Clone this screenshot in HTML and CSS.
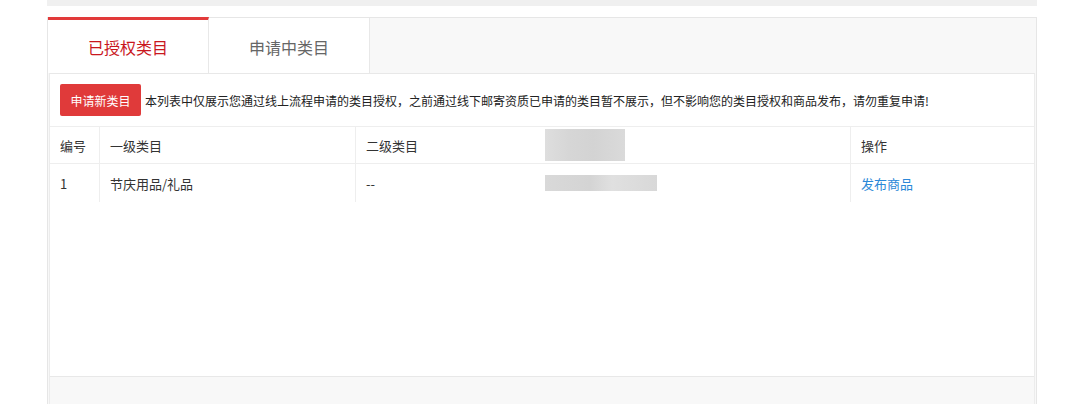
FILE: index.html
```html
<!DOCTYPE html>
<html lang="zh-CN">
<head>
    <meta charset="UTF-8">
    <meta name="viewport" content="width=device-width, initial-scale=1.0">
    <title>类目管理</title>
    <link rel="stylesheet" href="styles.css">
</head>
<body>

    <div class="page">
        <div class="top-strip"></div>

        <!-- Tabs -->
        <div class="tabs">
            <div class="tab-head">
                <div class="tab active">已授权类目</div>
                <div class="tab">申请中类目</div>
            </div>

            <div class="panel">
                <div class="panel-body">
                    <div class="toolbar">
                        <button class="btn-apply">申请新类目</button>
                        <span class="notice">本列表中仅展示您通过线上流程申请的类目授权，之前通过线下邮寄资质已申请的类目暂不展示，但不影响您的类目授权和商品发布，请勿重复申请!</span>
                    </div>

                    <table class="cat-table">
                        <thead>
                            <tr>
                                <th class="col-no">编号</th>
                                <th class="col-first">一级类目</th>
                                <th class="col-second">二级类目</th>
                                <th class="col-blur"><span class="blur blur-head"></span></th>
                                <th class="col-op">操作</th>
                            </tr>
                        </thead>
                        <tbody>
                            <tr>
                                <td>1</td>
                                <td>节庆用品/礼品</td>
                                <td>--</td>
                                <td><span class="blur blur-body"></span></td>
                                <td><a href="#">发布商品</a></td>
                            </tr>
                        </tbody>
                    </table>
                </div>
                <div class="panel-foot"></div>
            </div>
        </div>
    </div>

</body>
</html>
```

FILE: styles.css
```css
/* General */
body {
    margin: 0;
    background: #fff;
    font-family: "Noto Sans CJK SC", "Noto Sans", sans-serif;
    color: #333;
}

.page {
    width: 990px;
    margin-left: 47px;
}

.top-strip {
    height: 6px;
    background: #f0f0f0;
    margin-bottom: 11px;
}

/* Tabs */
.tabs {
    border: 1px solid #e6e6e6;
    border-bottom: none;
    background: #f8f8f8;
}

.tab-head {
    display: flex;
    height: 55px;
}

.tab {
    width: 161px;
    box-sizing: border-box;
    border-right: 1px solid #e8e8e8;
    background: #fff;
    font-size: 16px;
    color: #666;
    display: flex;
    align-items: center;
    justify-content: center;
    padding-top: 3px;
}

.tab.active {
    color: #c9171e;
    border-top: 3px solid #e23a3a;
    margin-top: -1px;
    padding-top: 0;
}

/* Panel */
.panel {
    margin: 0 1px;
    border-top: 1px solid #e8e8e8;
    border-left: 1px solid #ececec;
    border-right: 1px solid #ececec;
    background: #fff;
}

.panel-body {
    height: 302px;
}

.toolbar {
    display: flex;
    align-items: center;
    padding: 10px 10px;
    border-bottom: 1px solid #eee;
}

.btn-apply {
    width: 81px;
    height: 32px;
    padding: 0;
    border: none;
    border-radius: 2px;
    background: #e03a3a;
    color: #fff;
    font-family: inherit;
    font-size: 12px;
    cursor: pointer;
}

.notice {
    margin-left: 4px;
    font-size: 12px;
    color: #222;
}

/* Table */
.cat-table {
    width: 100%;
    border-collapse: collapse;
    font-size: 13px;
}

.cat-table th,
.cat-table td {
    text-align: left;
    padding: 0 10px;
    border-left: 1px solid #eee;
    font-weight: normal;
    color: #333;
}

.cat-table th:first-child,
.cat-table td:first-child {
    border-left: none;
}

.cat-table th {
    height: 36px;
    border-bottom: 1px solid #eee;
}

.cat-table td {
    height: 38px;
}

.col-no { width: 29px; }
.col-first { width: 235px; }
.col-second { width: 169px; }
.col-op { width: 163px; }

.cat-table th.col-blur,
.cat-table td:nth-child(4) {
    border-left: none;
    padding-left: 0;
}

.blur {
    display: block;
    background: linear-gradient(90deg, #dedede, #d6d6d6 30%, #d3d3d3 60%, #dadada);
}

.blur-head {
    width: 80px;
    height: 32px;
}

.blur-body {
    width: 112px;
    height: 16px;
    background: linear-gradient(90deg, #d9d9d9, #d4d4d4 40%, #e0e0e0 60%, #d8d8d8);
}

.cat-table a {
    color: #2b88d8;
    text-decoration: none;
}

/* Footer of panel */
.panel-foot {
    height: 40px;
    border-top: 1px solid #e8e8e8;
    background: #f8f8f8;
}
```
